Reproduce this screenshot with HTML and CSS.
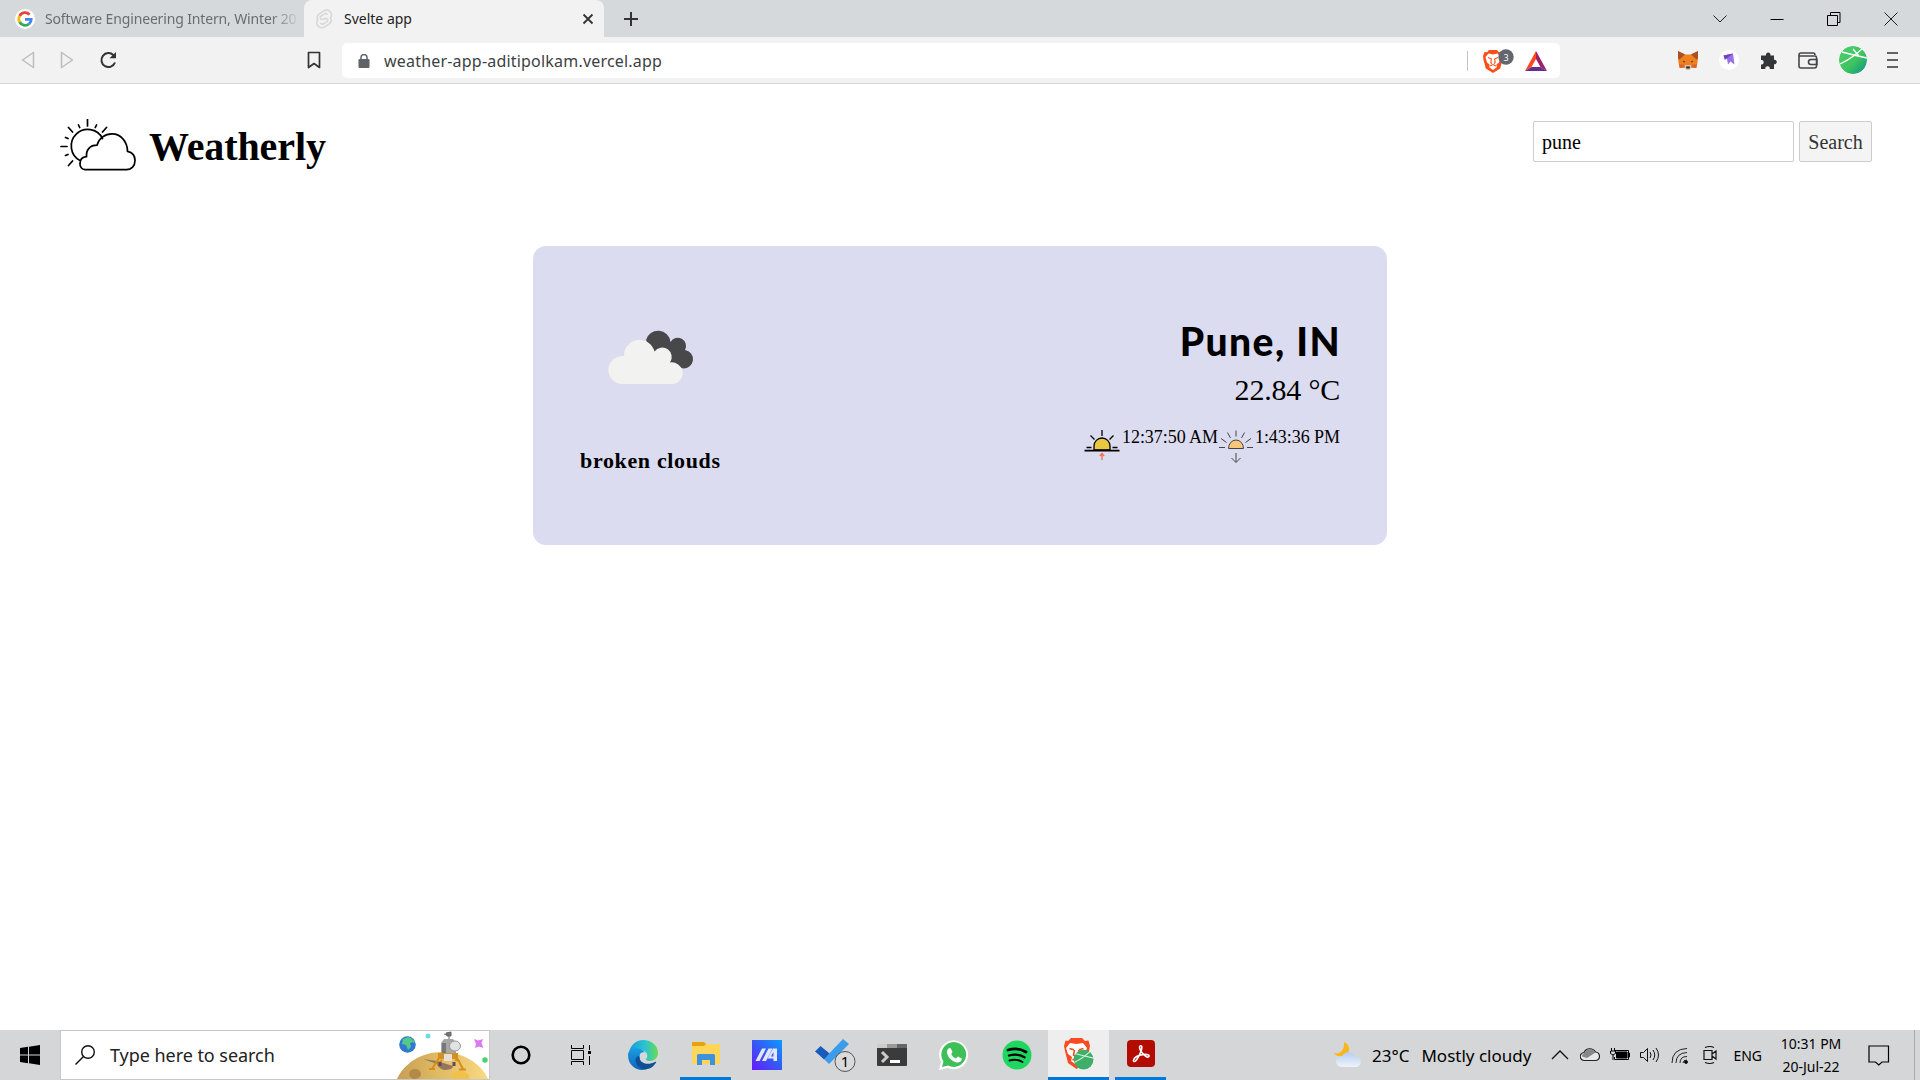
FILE: index.html
```html
<!DOCTYPE html>
<html lang="en">
<head>
<meta charset="utf-8">
<title>Svelte app</title>
<link rel="stylesheet" href="styles.css">
</head>
<body>
<header class="tabs">
  <div class="tab tab-idle">
    <svg width="20" height="20" viewBox="0 0 20 20"><circle cx="10" cy="10" r="10" fill="#fff"/><g fill="none" stroke-width="2.8"><path d="M14.6 5.6A6.2 6.2 0 0 0 4.6 7" stroke="#ea4335"/><path d="M4.6 7a6.2 6.2 0 0 0 0 6" stroke="#fbbc05"/><path d="M4.6 13a6.2 6.2 0 0 0 9.6 1.8" stroke="#34a853"/><path d="M14.2 14.8a6 6 0 0 0 2-4.4H10" stroke="#4285f4"/></g></svg>
    <span class="tab-title t-idle">Software Engineering Intern, Winter 20</span>
  </div>
  <div class="tab tab-active">
    <svg width="18" height="20" viewBox="0 0 18 20" fill="none" stroke="#d8d8d8" stroke-width="1.6"><path d="M15.6 3.2C14 .9 11 .4 8.800 1.800L4.600 4.600C2 6.300 1.700 8.800 2.800 10.800c-1.600 2.300-1.100 4.500.1 6 1.600 2.100 4.500 2.500 6.700 1.100l4.200-2.700c2.600-1.800 2.800-4.200 1.700-6.200 1.300-2 1.200-4.200.1-5.800z"/><path d="M12.500 5.500c-1-1.200-2.500-1-3.500-.3L6 7.200c-1.600 1.300-.4 3.600 1.500 3.200l3-1c2-.4 3 2 1.400 3.300l-3.200 2c-1.300.8-2.800.5-3.500-.8"/></svg>
    <span class="tab-title t-active">Svelte app</span>
    <svg class="tab-x" width="12" height="12" viewBox="0 0 12 12" stroke="#333" stroke-width="1.8"><path d="M1.500 1.500l9 9M10.500 1.500l-9 9"/></svg>
  </div>
  <svg class="plus" width="16" height="16" viewBox="0 0 16 16" stroke="#333" stroke-width="2"><path d="M8 1v14M1 8h14"/></svg>
  <div class="wincontrols">
    <svg width="14" height="14" viewBox="0 0 14 14" fill="none" stroke="#222"><path d="M.5 3.500L7 10l6.500-6.500"/></svg>
    <svg width="14" height="14" viewBox="0 0 14 14" fill="none" stroke="#000"><path d="M.5 7.500h13"/></svg>
    <svg width="14" height="14" viewBox="0 0 14 14" fill="none" stroke="#000"><path d="M.5 3.500h10v10H.5zM3.500 3V.5h9.500v10h-2.500"/></svg>
    <svg width="14" height="14" viewBox="0 0 14 14" fill="none" stroke="#222"><path d="M.5.5l13 13M13.500.5l-13 13"/></svg>
  </div>
</header>
<nav class="toolbar">
  <div class="navicons">
    <svg width="14" height="18" viewBox="0 0 14 18" fill="none" stroke="#bdbdbd" stroke-width="1.500" stroke-linejoin="round"><path d="M12.500 1.500v15L1.500 9z"/></svg>
    <svg width="14" height="18" viewBox="0 0 14 18" fill="none" stroke="#bdbdbd" stroke-width="1.500" stroke-linejoin="round"><path d="M1.500 1.500v15L12.500 9z"/></svg>
    <svg width="18" height="18" viewBox="0 0 18 18" fill="none" stroke="#333" stroke-width="2"><path d="M14.500 4.200A7 7 0 1 0 16 11.500"/><path d="M17 1v6.200h-6.500z" fill="#333" stroke="none"/></svg>
  </div>
  <svg class="bookmark" width="14" height="18" viewBox="0 0 14 18" fill="none" stroke="#333" stroke-width="1.700" stroke-linejoin="round"><path d="M1.500 1.500h11v15L7 12.500l-5.500 4z"/></svg>
  <div class="urlbar">
    <svg width="12" height="14" viewBox="0 0 12 14"><rect x=".5" y="5" width="11" height="9" rx="1.200" fill="#5f6368"/><path d="M3 6V3.500a3 3 0 0 1 6 0V6" fill="none" stroke="#5f6368" stroke-width="1.500"/></svg>
    <span class="url">weather-app-aditipolkam.vercel.app</span>
    <i class="divider"></i>
    <svg class="shield" width="32" height="26" viewBox="0 0 32 26"><path id="lion" d="M6 2h8l2 2.300 2.500-.3L20 8l-.5 4-2.300 8.500L10 25l-7.200-4.500L.5 12 0 8l1.500-4 2.500.3z" fill="#fb4f1a"/><path d="M5.500 5.500L10 6.500l4.500-1L17.500 9l-1.500 5.500-2.500 2 .5 2.500-4 3-4-3 .5-2.500L4 14.500 2.500 9z" fill="#fff"/><path d="M5 9.500l3 1.200M15 9.500l-3 1.200M8.500 10.500l-.7 4 1.200 1.200M11.500 10.500l.7 4-1.200 1.200M6.500 18.200L10 16.500l3.500 1.700" stroke="#fb4f1a" stroke-width="1.100" fill="none"/><circle cx="23" cy="9" r="7.700" fill="#63656f"/><text x="23" y="12.500" class="badge-text" text-anchor="middle">3</text></svg>
    <svg width="24" height="22" viewBox="0 0 24 22"><path d="M12 1L1 21l6.500-4L12 9z" fill="#ff4724"/><path d="M12 1l11 20-6.500-4L12 9z" fill="#9e1f63"/><path d="M1 21h22l-6.500-4h-9z" fill="#662d91"/></svg>
  </div>
  <div class="extensions">
    <svg width="22" height="20" viewBox="0 0 22 20"><path d="M1 1l7 3.500h6L21 1v8l-.5 3.500L19.500 18l-5.500-.5-1.500 2h-3l-1.500-2-5.500.5-1-5.500L1 9z" fill="#f0801f"/><path d="M1 1l7 3.500-5.500 5L1 8zM21 1l-7 3.500 5.500 5L21 8z" fill="#a65125"/><path d="M2 14l5 .5 1.500 3-5.500.5zM20 14l-5 .5-1.500 3 5.500.5z" fill="#d9672a"/><path d="M8 15h6l.5 2-2 2.500h-3l-2-2.500z" fill="#d6c0b3"/><path d="M9 16.500h4l-.5 2h-3z" fill="#28201c"/><path d="M6 10.500l2.500 1.500-2 .5zM16 10.500L13.500 12l2 .5z" fill="#333"/></svg>
    <svg width="20" height="20" viewBox="0 0 20 20"><circle cx="10" cy="10" r="10" fill="#fff"/><path d="M4.500 5.500L14 3.500l1.500 11-4-3-2.500 3L8 9z" fill="#9a70ea"/><path d="M4.500 5.500L14 3.500 5.800 10z" fill="#6a45c0"/></svg>
    <svg width="18" height="18" viewBox="0 0 18 18" fill="#333639"><path d="M1 4.500h5a2.300 2.300 0 1 1 4.400 0H14v4.300a2.300 2.300 0 1 1 0 4.500V18h-4.300a2.200 2.200 0 1 0-4.300 0H1v-4.600a2.200 2.200 0 1 0 0-4.300z"/></svg>
    <svg width="20" height="17" viewBox="0 0 20 17" fill="none" stroke="#444649" stroke-width="1.600"><path d="M18.500 5.500v8.500a2 2 0 0 1-2 2H3a2 2 0 0 1-2-2V3a2 2 0 0 1 2-2h12a2 2 0 0 1 2 2M1.500 4h15.500a1.500 1.500 0 0 1 1.500 1.500M19 7.500h-6a2.500 2.500 0 0 0 0 5h6z"/></svg>
    <svg width="28" height="28" viewBox="0 0 28 28"><defs><linearGradient id="globe" x1="0" y1="0" x2="1" y2="1"><stop offset="0" stop-color="#4fcf70"/><stop offset=".55" stop-color="#3fc45f"/><stop offset="1" stop-color="#0a8f8d"/></linearGradient><clipPath id="disc"><circle cx="14" cy="14" r="14"/></clipPath></defs><g clip-path="url(#disc)"><circle cx="14" cy="14" r="14" fill="url(#globe)"/><path d="M3 6Q14 9 28 12M1 18Q14 12 25 1M14 3l6 7" fill="none" stroke="#fff" stroke-width="1.300"/></g></svg>
    <svg width="11" height="16" viewBox="0 0 11 16" stroke="#333" stroke-width="1.600"><path d="M0 1h11M0 8h11M0 15h11"/></svg>
  </div>
</nav>
<main class="page">
  <div class="topbar">
    <div class="brand">
      <svg width="78" height="54" viewBox="0 0 78 54" fill="none" stroke="#000" stroke-width="1.700" stroke-linecap="round" stroke-linejoin="round"><path d="M20 41.500A16.500 16.500 0 1 1 42.500 19.500"/><path d="M25 50.700a5.500 5.500 0 0 1-5-6c0-3.500 2-6.500 6.500-7-.5-7 3.500-11.500 10.500-11.500 2-7 8-11.300 15-11.300 9 0 15.500 8 15.500 17.500 4.500 1 7.500 4.500 7.500 9 0 5.500-3.500 9.300-8.500 9.300z"/><path d="M27.500 0v7M1 27.500h6M8.500 8.500l4 4.500M46.500 8.500L42.500 13M8.500 46.500l4-4.500M18.500 6l1.200 2.500M36.500 6l-1.200 2.500M5.500 18.500l2.500 1M5.500 36.500l2.500-1"/></svg>
      <h1>Weatherly</h1>
    </div>
    <form class="search"><input class="query" value="pune"><button class="go" type="button">Search</button></form>
  </div>
  <section class="card">
    <div class="sky">
      <svg width="88" height="56" viewBox="0 0 88 56"><path d="M39 11a12.500 12.500 0 0 1 24.500 2 8 8 0 0 1 14.500 8 9.200 9.200 0 1 1-2.500 18.300L50 30z" fill="#48484a"/><path d="M14 55A13.500 13.500 0 0 1 17 27a15.500 15.500 0 0 1 30.500-4.500 9 9 0 0 1 15.500 11A10.800 10.800 0 0 1 66.500 55z" fill="#f2f2f0"/></svg>
      <p class="desc">broken clouds</p>
    </div>
    <div class="facts">
      <h2>Pune, IN</h2>
      <p class="temp">22.84 °C</p>
      <div class="sun">
        <svg width="36" height="32" viewBox="0 0 36 32" fill="none" stroke="#000"><path d="M10 20v-4a8 8 0 0 1 16 0v4z" fill="#e9c93f" stroke-width="1.300"/><path d="M.5 20.700h35" stroke-width="1.700"/><path d="M2.500 17.500h5M28.500 17.500h5M18 0v6M6.500 5.500l4 4M29.500 5.500l-4 4" stroke-width="1.300"/><path d="M18 30v-6M15.800 26l2.200-2.500 2.200 2.500" stroke="#f07050" stroke-width="1.400"/></svg>
        <span class="rise">12:37:50 AM</span>
        <svg width="36" height="34" viewBox="0 0 36 34" fill="none" stroke="#444"><path d="M10.500 18.500a7.500 8.500 0 0 1 15 0z" fill="#f8c77c"/><path d="M1 17.500h6M29 17.500h6M3 8.500l5.500 4M33 8.500l-5.500 4M9.500 2.500l3 5.500M26.500 2.500l-3 5.500M18 .5v6M18 23v9M13.500 28l4.500 4.500 4.500-4.500"/></svg>
        <span class="set">1:43:36 PM</span>
      </div>
    </div>
  </section>
</main>
<footer class="taskbar">
  <div class="start"><svg width="20" height="20" viewBox="0 0 20 20"><path d="M0 3l8-1.200v7.700H0zM9 1.700L20 0v9.500H9zM0 10.500h8v7.700L0 17zM9 10.500h11V20L9 18.300z"/></svg></div>
  <div class="tasksearch">
    <svg width="20" height="20" viewBox="0 0 20 20" fill="none" stroke="#111" stroke-width="1.400"><circle cx="13" cy="7" r="6.300"/><path d="M8.500 11.500L.5 19.500"/></svg>
    <span>Type here to search</span>
    <svg class="moon" width="92" height="48" viewBox="0 0 92 48"><defs><linearGradient id="sand"><stop offset="0" stop-color="#c89f54"/><stop offset=".5" stop-color="#e3bd66"/><stop offset="1" stop-color="#f8d983"/></linearGradient></defs><path d="M0 48C7 32 25 21 45 21S84 32 91 48z" fill="url(#sand)"/><ellipse cx="18" cy="43" rx="6" ry="5" fill="#b48a48"/><path d="M26 28l14 2 16 5q0 4-9 4-6-2-7-6z" fill="#94765f"/><ellipse cx="63" cy="46" rx="9" ry="6" fill="#f2c14c"/><circle cx="10.500" cy="13.500" r="8.300" fill="#3178d2"/><path d="M6 8l5-2 3 1 2 4-3 1 1 4-3 3-2-5-4-1zM15 7l3 4-2 1z" fill="#54c987"/><circle cx="31" cy="5" r="2.500" fill="#6edbe7"/><path d="M77 8l4 1.500 5-1.500-1.500 4 2 5-4.500-1.500-4 1.500 1-4z" fill="#dd78f5"/><circle cx="88" cy="29" r="2.700" fill="#45d36d"/><path d="M44 12l3-4h9l3 4v12H44z" fill="#a6a6a8"/><path d="M49 2l5-1v4h-4zM47 3l4 1M52 5v3" fill="#777" stroke="#666"/><path d="M45 12h4v10h-4z" fill="#777"/><ellipse cx="58" cy="15" rx="5.500" ry="5" fill="#e2e2e2" stroke="#999"/><path d="M41 24h20M42 27l-7 11M60 27l6 11M45 29l-4 4M58 29l5 1M32 38h6M62 38.500h7" stroke="#d98e18" stroke-width="2" fill="none"/><path d="M41 22h20v6H41z" fill="#d38f20"/><path d="M47 23h8v7h-8z" fill="#e4e0d8"/><path d="M43 31v4M57 31v4" stroke="#61495d" stroke-width="3"/></svg>
  </div>
  <div class="apps">
    <div class="app narrow"><svg width="20" height="20" viewBox="0 0 20 20"><circle cx="10" cy="10" r="8.300" fill="none" stroke="#000" stroke-width="2.600"/></svg></div>
    <div class="app narrow"><svg class="views" width="20" height="20" viewBox="0 0 20 20" fill="none" stroke="#000"><path d="M.5 0v3.500h12V0M.5 5.500h12v9H.5zM.5 20v-3.500h12V20M18.500 0v5M18.500 11v9"/><path d="M17 6h3v3h-3z" fill="#000" stroke="none"/></svg></div>
    <div class="app"><svg width="30" height="30" viewBox="0 0 30 30"><defs><linearGradient id="ea"><stop offset="0" stop-color="#1899dd"/><stop offset=".55" stop-color="#2bc3d2"/><stop offset="1" stop-color="#67dd4f"/></linearGradient><linearGradient id="eb" x1="0" y1="0" x2="0" y2="1"><stop offset="0" stop-color="#1b9de2"/><stop offset="1" stop-color="#0c66ba"/></linearGradient></defs><path d="M1 12C3 4 9 0 15 0c9 0 15 6 15 13 0 5-4 8-8 8-3 0-5-1-4-3 3-4-1-8-6-8-5-1-9 0-11 2z" fill="url(#ea)"/><path d="M0 15c0-5 6-8 12-6 3 1 5 3 5 6-2-3-5 0-5 4 0 6 6 9 9 9-8 5-21 0-21-13z" fill="url(#eb)"/><path d="M11 16c0 7 8 10 16 6 2-1 1 1 0 2-4 6-12 7-17 2-4-5-3-9 1-10z" fill="#104f94"/><circle cx="15.500" cy="16" r="3.800" fill="#d5d8d8"/></svg></div>
    <div class="app run inset"><svg width="28" height="24" viewBox="0 0 28 24"><path d="M0 0h12l2 2v6H0z" fill="#e5a20a"/><path d="M0 4h12l2-2h14v20H0z" fill="#ffd65a"/><path d="M5 23V13.500q0-1.500 1.500-1.500h15q1.500 0 1.500 1.500V23h-5v-5h-8v5z" fill="#3d92dc"/></svg></div>
    <div class="app"><svg width="30" height="30" viewBox="0 0 30 30"><defs><linearGradient id="ma" x1="1" y1="0" x2="0" y2="1"><stop offset="0" stop-color="#0a9cff"/><stop offset=".5" stop-color="#3658f5"/><stop offset="1" stop-color="#6819ff"/></linearGradient></defs><path d="M0 0h30v30H0z" fill="url(#ma)"/><path d="M3.500 21L10 8.500h4L7.500 21zM10 21l6.500-12.500h4L14 21zM15.500 18.500L21 8.500h4V21h-3.500v-2.500z" fill="#e4e6ff"/><path d="M19 16.500h2.500V12z" fill="#3658f5"/></svg></div>
    <div class="app wide"><svg class="todo" width="42" height="36" viewBox="0 0 42 36"><path d="M10 22L29 2l6 5-20 20z" fill="#3a9cea"/><path d="M1 14.500l5.500-5.500 9 7.500-5.500 5.500z" fill="#185abd"/><path d="M6 18.500l4 4 5-6-3.500-3z" fill="#185abd"/><circle cx="31" cy="24.500" r="10" fill="#dadada" stroke="#555"/><text x="31" y="30" text-anchor="middle" class="count">1</text></svg></div>
    <div class="app"><svg width="30" height="22" viewBox="0 0 30 22"><rect width="30" height="22" rx="1" fill="#3b3b3b"/><path d="M0 0h10v4H0z" fill="#ccc"/><path d="M10 0h10v4H10z" fill="#999"/><path d="M20 0h10v4H20z" fill="#666"/><path d="M5 8l5 5-5 5" fill="none" stroke="#ccc" stroke-width="3"/><path d="M13 16h10v3H13z" fill="#fff"/></svg></div>
    <div class="app"><svg width="30" height="30" viewBox="0 0 30 30"><path d="M0 30l2-8A14.500 14.500 0 1 1 8.500 28z" fill="#fff"/><path d="M3 27l1.500-5.500a12.400 12.400 0 1 1 4.500 4z" fill="#3fbf57"/><path d="M9.500 8.500l2-.5 2 4-1.300 2c1 2.200 2.500 3.500 4.700 4.500l2-2 4 2c0 3-3 4.500-5.500 4C12 21 8 16 8 12c0-2 .8-3 1.500-3.500z" fill="#fff"/></svg></div>
    <div class="app wide"><svg width="30" height="30" viewBox="0 0 30 30"><circle cx="15" cy="15" r="14.500" fill="#1ed760"/><g fill="none" stroke="#000" stroke-linecap="round"><path d="M6 10q10-3 18 2" stroke-width="2.800"/><path d="M7 15.500q8.500-2.500 15.500 1.800" stroke-width="2.300"/><path d="M7.500 20.500q7.500-2 13 1.500" stroke-width="1.900"/></g></svg></div>
    <div class="app run narrow current"><svg width="30" height="32" viewBox="0 0 30 32"><path d="M7 0h11l3 3 3.500-.5L26 8l-1 5-3 12-9.500 6L4 25 1 13 0 8l1.500-5.500L4 3z" fill="#fb4a20"/><path d="M6 5l6.500 1L19 5l4 5-2 6-4 3 1 4-5.500 4L7 23l1-4-4-3-2-6z" fill="#fff"/><path d="M5.500 10.500l4.500 1.200M19.500 10.500L15 11.700M10.500 12l-1 5 2 1.500M14.500 12l1 5-2 1.500M8.500 22l4-2 4 2" stroke="#fb4a20" stroke-width="1.600" fill="none"/><g transform="translate(9.500 11.500) scale(.72)" clip-path="url(#disc)"><circle cx="14" cy="14" r="14" fill="#3eae68"/><path d="M3 6Q14 9 28 12M1 18Q14 12 25 1" fill="none" stroke="#d0f4d5" stroke-width="1.500"/></g></svg></div>
    <div class="app run inset"><svg width="28" height="27" viewBox="0 0 28 27"><rect width="28" height="27" rx="4" fill="#b30b00"/><path d="M6.500 20c1-3 6-5 10-5.500 4-.4 6 .7 5.500 2-1 2-5-1-7.500-4.500-2.300-3-2.500-6-1-6.300 2-.3 1.500 3.300 0 6.800-2 4.800-5 9.500-6.500 9-.7-.3-.8-.7-.5-1.500z" fill="none" stroke="#fff" stroke-width="1.600"/></svg></div>
  </div>
  <div class="weather">
    <svg width="28" height="26" viewBox="0 0 28 26"><defs><linearGradient id="cl" x1="0" y1="0" x2="0" y2="1"><stop offset="0" stop-color="#b5cdf1"/><stop offset="1" stop-color="#eef3fb"/></linearGradient></defs><path d="M10 0c5 2 7 8 3 12s-11 3-13-1c6 2 11-3 10-11z" fill="#f9b51b"/><path d="M7 25a5.500 5.500 0 0 1 1-11 7.500 7.500 0 0 1 13.500 1A5 5 0 0 1 22 25z" fill="url(#cl)"/></svg>
    <span class="deg">23°C</span><span class="cond">Mostly cloudy</span>
  </div>
  <div class="tray">
    <svg width="20" height="20" viewBox="0 0 20 20" fill="none" stroke="#111" stroke-width="1.300"><path d="M2 14l8-8 8 8"/></svg>
    <svg width="20" height="20" viewBox="0 0 20 20"><path d="M4.500 15.500a4 4 0 0 1-.5-8A6.500 6.500 0 0 1 15.500 7 4.300 4.300 0 0 1 16 15.500z" fill="#e8e8e8" stroke="#222" stroke-width="1.200"/><path d="M4.500 8a6 6 0 0 1 11-.5L7 13l-5-1.500q0-3 2.500-3.500z" fill="#888"/></svg>
    <svg width="20" height="20" viewBox="0 0 20 20" fill="none" stroke="#000"><path d="M5 5.500h13.500v9H4.500V12M18.500 8h1v4h-1"/><path d="M6.500 7H17v6H6.500z" fill="#000"/><path d="M1.500 3v3M4.500 3v3M.5 6h5v2.500L3 10 .5 8.500zM3 10v5"/></svg>
    <svg width="20" height="20" viewBox="0 0 20 20" fill="none" stroke="#111"><path d="M.5 7.500h3l4-4v13l-4-4h-3zM10 7q2 3 0 6M13 5q3.500 5 0 10M16 3q5 7 0 14"/></svg>
    <svg width="20" height="20" viewBox="0 0 20 20" fill="none" stroke="#222"><path d="M2 18Q2 4 17 3.500M6 18Q6 8 17 7.500M10 18q0-6.500 7-6.500M13 18q0-3 4-3"/><circle cx="16" cy="17" r="1.500" fill="#000"/></svg>
    <svg width="20" height="20" viewBox="0 0 20 20" fill="none" stroke="#111" stroke-width="1.200"><path d="M4 5.500h8v9H4zM12 9l4-3v8l-4-3M5 2.500q5-2 9 0M5 17.500q5 2 9 0"/></svg>
  </div>
  <span class="lang">ENG</span>
  <div class="clock"><span class="time">10:31 PM</span><span class="date">20-Jul-22</span></div>
  <svg class="note" width="22" height="21" viewBox="0 0 22 21" fill="none" stroke="#000" stroke-width="1.200"><path d="M1 1h19.500v16H14l-3.200 3L7.500 17H1z"/></svg>
  <i class="peek"></i>
</footer>
</body>
</html>
```
FILE: styles.css
```css
* { box-sizing: border-box; }
html, body { margin: 0; height: 100%; }
body { display: flex; flex-direction: column; width: 1920px; height: 1080px; overflow: hidden; background: #fff; font-family: "Liberation Serif", serif; color: #000; }
svg { display: block; flex: none; }
p, h1, h2 { margin: 0; }
span { white-space: nowrap; }

.tabs, .toolbar, .taskbar { font-family: "Noto Sans", "Open Sans", sans-serif; flex: none; }
.tabs { display: flex; align-items: center; height: 37px; background: #d5d9dc; }
.tab { display: flex; align-items: center; height: 37px; }
.tab-idle { width: 304px; padding: 0 0 0 15px; gap: 10px; }
.tab-active { width: 300px; padding: 0 10px 0 11px; background: #f2f2f2; border-radius: 8px 8px 0 0; }
.tab-title { font-size: 14px; }
.t-idle { color: #6a6d70; letter-spacing: -.15px; -webkit-mask-image: linear-gradient(to right, #000 90%, rgba(0,0,0,.15)); mask-image: linear-gradient(to right, #000 90%, rgba(0,0,0,.15)); }
.t-active { margin-left: 11px; color: #222; }
.tab-x { margin-left: auto; }
.plus { margin-left: 19px; }
.wincontrols { display: flex; gap: 43px; margin-left: auto; padding-right: 22px; }

.toolbar { display: flex; align-items: center; height: 47px; background: #f2f2f2; border-bottom: 1px solid #d3d5d6; }
.navicons { display: flex; align-items: center; gap: 25px; padding-left: 21px; }
.bookmark { margin-left: 190px; }
.urlbar { display: flex; align-items: center; width: 1218px; height: 35px; margin-left: 21px; padding: 2px 12px 0 16px; background: #fff; border-radius: 5px; }
.url { margin-left: 14px; font-size: 16px; letter-spacing: .2px; color: #3c3f43; }
.divider { width: 1px; height: 20px; margin-left: auto; background: #c4c4c4; }
.shield { margin: 0 9px 0 15px; }
.badge-text { font-size: 9px; fill: #fff; }
.extensions { display: flex; align-items: center; flex: 1; justify-content: space-between; padding: 0 22px 0 117px; }

.page { flex: 1; }
.topbar { display: flex; justify-content: space-between; height: 162px; padding: 33px 48px 0 60px; }
.brand { display: flex; align-items: flex-start; gap: 11px; }
.brand svg { margin-top: 2px; }
.brand h1 { margin-top: 7px; font-size: 40px; line-height: 46px; letter-spacing: -.1px; }
.search { display: flex; gap: 5px; margin-top: 4px; }
.query, .go { height: 41px; border: 1px solid #ccc; border-radius: 2px; font: 20px "Liberation Serif", serif; }
.query { width: 261px; padding: 1px 8px 0; }
.go { width: 73px; padding: 1px 0 0; background: #f4f4f4; color: #333; }
.card { display: flex; justify-content: space-between; width: 854px; height: 299px; margin: 0 auto; padding: 0 47px; background: #dcdcf0; border-radius: 13px; }
.sky svg { margin: 83px 0 0 27px; }
.desc { margin-top: 62px; font-size: 22px; line-height: 28px; font-weight: bold; letter-spacing: .65px; }
.facts { display: flex; flex-direction: column; align-items: flex-end; }
.facts h2 { margin: 71px -1px 0 0; font: 900 39px/48px Lato, sans-serif; letter-spacing: 1.400px; }
.temp { margin-top: 8px; font-size: 30px; line-height: 34px; letter-spacing: -.2px; }
.sun { display: flex; margin-top: 22px; font-size: 18px; line-height: 20px; letter-spacing: -.05px; }
.sun svg { margin-top: 1px; }
.rise { margin: -2px 0 0 2px; }
.set { margin: -2px 0 0 1px; }

.taskbar { display: flex; align-items: center; height: 50px; background: #d5d6d7; }
.start { display: flex; justify-content: center; width: 60px; }
.tasksearch { display: flex; align-items: center; align-self: stretch; width: 430px; padding-left: 14px; background: #fff; border: 1px solid #c7c7c7; font-size: 18px; letter-spacing: -.05px; color: #222; }
.tasksearch span { margin-left: 15px; }
.moon { margin-left: auto; }
.apps { display: flex; align-self: stretch; }
.app { display: flex; align-items: center; justify-content: center; width: 62px; }
.narrow { width: 61px; }
.wide { width: 63px; }
.views { margin-right: 2px; }
.todo { margin-left: 10px; }
.run { border-bottom: 3px solid #0078d7; }
.inset { width: 51px; margin: 0 5px 0 6px; }
.current { background: #eee; }
.count { font-size: 15px; }
.weather { display: flex; align-items: center; margin-left: auto; font-size: 17px; }
.deg { margin-left: 10px; }
.cond { margin-left: 12px; }
.tray { display: flex; gap: 10px; margin-left: 19px; }
.lang { margin-left: 13px; font-size: 14px; }
.clock { display: flex; flex-direction: column; align-items: center; width: 64px; margin-left: 17px; font-size: 14px; line-height: 23px; }
.note { margin-left: 25px; }
.peek { align-self: stretch; width: 1px; margin: 0 5px 0 24px; background: #aaa; }
```
